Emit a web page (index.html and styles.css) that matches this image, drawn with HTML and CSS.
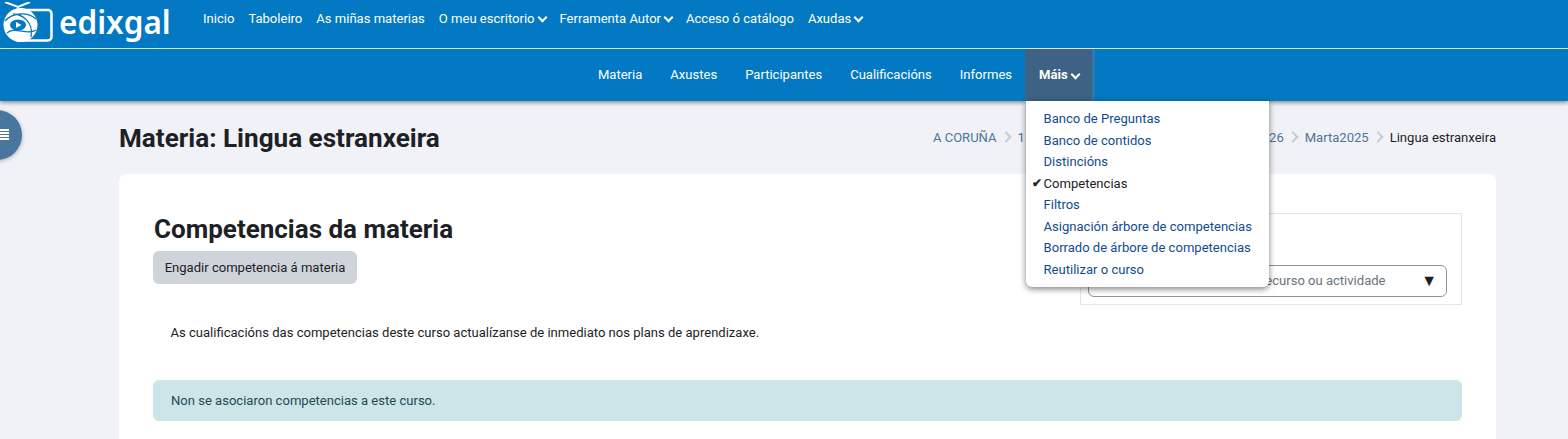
FILE: index.html
```html
<!DOCTYPE html>
<html lang="gl">
<head>
<meta charset="utf-8">
<title>Competencias da materia</title>
<link rel="stylesheet" href="styles.css">
</head>
<body>
<header class="topbar">
  <a class="brand">
    <svg class="logo" width="54" height="40" viewBox="0 0 54 40">
      <path d="M5 0 L18 5 L30 0" fill="none" stroke="#fff" stroke-width="2"/>
      <path d="M18 8H48a3.500 3.500 0 0 1 3.500 3.500V35a3.500 3.500 0 0 1-3.500 3.500H18z" fill="none" stroke="#fff" stroke-width="2.500"/>
      <circle cx="20.500" cy="23" r="17" fill="#fff"/>
      <path d="M5 19C12 11 27 9 36 17M7 31C14 24 28 34 36 28M13 12C22 12 34 20 31 35" fill="none" stroke="#0279c2" stroke-width="1.300"/>
      <ellipse cx="18" cy="23" rx="8" ry="5.500" fill="#0279c2"/>
      <path d="M16 20l5.500 3-5.500 3z" fill="#fff"/>
    </svg>
    <span class="wordmark">edixgal</span>
  </a>
  <nav class="topnav">
    <a>Inicio</a><a>Taboleiro</a><a>As miñas materias</a>
    <a class="caret">O meu escritorio</a><a class="caret">Ferramenta Autor</a>
    <a>Acceso ó catálogo</a><a class="caret">Axudas</a>
  </nav>
</header>
<nav class="secnav">
  <a>Materia</a><a>Axustes</a><a>Participantes</a><a>Cualificacións</a><a>Informes</a>
  <div class="more">
    <a class="more-link caret">Máis</a>
    <ul class="menu">
      <li><a>Banco de Preguntas</a></li>
      <li><a>Banco de contidos</a></li>
      <li><a>Distincións</a></li>
      <li class="current"><a>Competencias</a></li>
      <li><a>Filtros</a></li>
      <li><a>Asignación árbore de competencias</a></li>
      <li><a>Borrado de árbore de competencias</a></li>
      <li><a>Reutilizar o curso</a></li>
    </ul>
  </div>
</nav>
<button class="drawer" aria-label="Menu"><span class="bars"></span></button>
<main class="page">
  <div class="page-head">
    <h1>Materia: Lingua estranxeira</h1>
    <ol class="crumbs">
      <li>A CORUÑA</li><li>15000000</li><li class="school">CEIP Castrelo</li><li>Curso 2025-26</li><li>Marta2025</li><li class="last">Lingua estranxeira</li>
    </ol>
  </div>
  <section class="card">
    <div class="card-top">
      <div class="card-left">
        <h2>Competencias da materia</h2>
        <button class="btn">Engadir competencia á materia</button>
      </div>
      <div class="filter">
        <div class="select"><span>Seleccionar recurso ou actividade</span><span class="arrow">▼</span></div>
      </div>
    </div>
    <p class="note">As cualificacións das competencias deste curso actualízanse de inmediato nos plans de aprendizaxe.</p>
    <div class="alert">Non se asociaron competencias a este curso.</div>
  </section>
</main>
</body>
</html>
```
FILE: styles.css
```css
* { box-sizing: border-box; }
html, body { margin: 0; height: 439px; overflow: hidden; }
body { background: #f1f2f7; font: 13.05px/20px Roboto, sans-serif; color: #1d2125; }
a { color: inherit; text-decoration: none; }
.topbar { height: 49px; background: #0279c2; border-bottom: 1px solid #e4eef6; display: flex; align-items: center; color: #fff; }
.brand { display: flex; align-items: center; width: 203px; height: 48px; flex: none; }
.logo { flex: none; margin-top: -5px; }
.wordmark { font: 600 31.5px/40px "Noto Sans", sans-serif; margin-left: 5px; margin-top: -5px; }
.topnav { display: flex; gap: 14px; margin-top: -11px; }
.caret::after { content: ""; display: inline-block; width: 5px; height: 5px; border: solid currentColor; border-width: 0 2px 2px 0; transform: rotate(45deg); margin: 0 0 2px 4px; }
.secnav { height: 52px; background: #0279c2; display: flex; justify-content: center; align-items: center; gap: 28px; color: #fff; box-shadow: 0 2px 4px rgba(0,0,0,.4); position: relative; z-index: 2; padding-left: 125px; }
.more { position: relative; height: 52px; margin-left: -15px; }
.more-link { display: flex; align-items: center; height: 52px; width: 70px; padding: 0 0 0 14px; background: #3e6283; font-weight: 700; border-right: 3px solid #2f77ae; }
.menu { position: absolute; top: 52px; left: 1px; width: 243px; height: 186px; margin: 0; padding: 7px 0 0; list-style: none; background: #fff; border-radius: 0 0 6px 6px; box-shadow: 0 2px 6px rgba(0,0,0,.5); z-index: 5; }
.menu li { height: 21.5px; padding-left: 17.500px; color: #0f4c8f; line-height: 21.5px; position: relative; white-space: nowrap; }
.menu .current { color: #1d2125; }
.current::before { content: "✔"; position: absolute; left: 6px; font-size: 12px; font-weight: 700; }
.drawer { position: absolute; left: -28px; top: 110px; width: 50px; height: 50px; border: 0; border-radius: 50%; background: #49769f; box-shadow: 0 1px 4px rgba(0,0,0,.3); padding: 0; }
.bars { position: absolute; left: 28px; top: 19px; width: 9px; height: 11px; background: repeating-linear-gradient(#fff 0 2px, transparent 2px 3px); }
.page { padding: 0 72px 0 119px; }
.page-head { display: flex; justify-content: space-between; align-items: center; height: 73px; }
h1 { margin: 0; font-size: 26.1px; line-height: 30px; font-weight: 700; }
.crumbs { display: flex; list-style: none; margin: 0; padding: 0; color: #4d7599; }
.crumbs li + li::before { content: ""; display: inline-block; width: 6px; height: 6px; border: solid #c8cdd3; border-width: 2px 2px 0 0; transform: rotate(45deg); margin: 0 8px 1px 5px; }
.crumbs .school { padding-right: 1px; }
.crumbs .last { color: #1d2125; }
.card { background: #fff; border-radius: 8px; height: 300px; padding: 32px 34px; }
.card-top { display: flex; justify-content: space-between; height: 98px; }
h2 { margin: 8px 0 7px; padding-left: 1px; font-size: 26px; line-height: 30px; font-weight: 700; }
.btn { display: block; height: 33px; width: 204px; padding: 0; border: 0; border-radius: 6px; background: #ced4da; font: 13.05px Roboto, sans-serif; color: #1d2125; }
.filter { width: 382px; height: 92px; margin-top: 7px; border: 1px solid #e3e5ea; padding: 51px 14px 0 7px; }
.select { height: 32px; border: 1px solid #8f959e; border-radius: 6px; display: flex; justify-content: space-between; align-items: center; padding: 0 9px 0 101px; color: #6a737b; }
.arrow { color: #1d2125; font-size: 16px; }
.note { margin: 19px 0 0 17.500px; color: #1d2125; }
.alert { margin-top: 37px; height: 41px; background: #cbe5e8; border-radius: 6px; padding: 11px 18px 0; color: #1f4a52; }
```
